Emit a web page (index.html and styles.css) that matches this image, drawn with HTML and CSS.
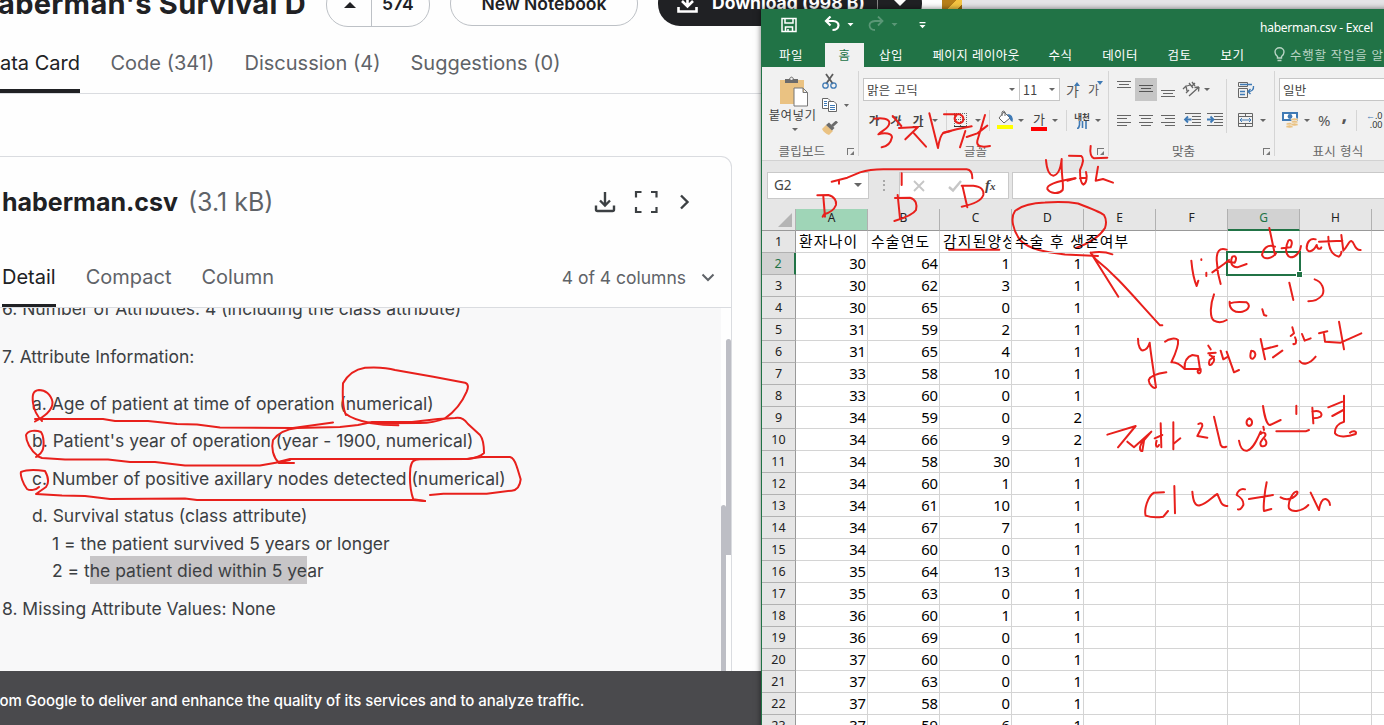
FILE: index.html
```html
<!DOCTYPE html>
<html lang="ko">
<head>
<meta charset="utf-8">
<title>haberman.csv - Excel</title>
<link rel="stylesheet" href="styles.css">
</head>
<body>
<main class="desktop">

<section class="site">
  <header class="site-head">
    <h1 class="title">aberman's Survival D</h1>
    <div class="vote">
      <span class="vote-up"><svg width="12" height="8" viewBox="0 0 12 8"><path d="M0 7L6 1L12 7Z" fill="#202124"/></svg></span>
      <span class="vote-n">574</span>
    </div>
    <div class="notebook">New Notebook</div>
    <div class="download">
      <svg width="21" height="21" viewBox="0 0 21 21" fill="none" stroke="#fff" stroke-width="2.6"><path d="M10.500 0V13M5 8L10.500 13.500L16 8M1.500 14V18.500H19.500V14"/></svg>
      <span class="download-t">Download (998 B)</span>
      <span class="download-more"><svg width="16" height="8" viewBox="0 0 16 8"><path d="M1 0H15L8 7Z" fill="#fff"/></svg></span>
    </div>
    <div class="medal"></div>
    <div class="cover"></div>
  </header>
  <nav class="tabs">
    <span class="tab tab-on">ata Card</span><span class="tab t-code">Code (341)</span><span class="tab t-disc">Discussion (4)</span><span class="tab t-sug">Suggestions (0)</span>
  </nav>
  <article class="card">
    <div class="card-head">
      <b class="file">haberman.csv</b><span class="size">(3.1 kB)</span>
      <div class="tools">
        <svg width="22" height="22" viewBox="0 0 22 22" fill="none" stroke="#3c4043" stroke-width="2.4"><path d="M11 1V14M6 9.500L11 14.500L16 9.500M2 14.500V18.500Q2 20 3.500 20H18.500Q20 20 20 18.500V14.500"/></svg>
        <svg width="24" height="24" viewBox="0 0 24 24" fill="none" stroke="#3c4043" stroke-width="2.2"><path d="M2 7.500V2H7.500M17 2H22.500V7.500M22.500 17V22H17M7.500 22H2V17"/></svg>
        <svg width="12" height="16" viewBox="0 0 12 16" fill="none" stroke="#3c4043" stroke-width="2.4"><path d="M2 1.500L8.500 8L2 14.500"/></svg>
      </div>
    </div>
    <div class="views">
      <span class="view view-on">Detail</span><span class="view">Compact</span><span class="view">Column</span>
      <span class="cols">4 of 4 columns</span>
      <svg width="14" height="9" viewBox="0 0 14 9" fill="none" stroke="#5f6368" stroke-width="2"><path d="M1.500 1.500L7 7L12.500 1.500"/></svg>
    </div>
    <div class="desc">
      <div class="text">
        <p class="p6">6. Number of Attributes: 4 (including the class attribute)</p>
        <p class="p7">7. Attribute Information:</p>
        <p class="sub">a. Age of patient at time of operation (numerical)</p>
        <p class="sub">b. Patient's year of operation (year - 1900, numerical)</p>
        <p class="sub">c. Number of positive axillary nodes detected (numerical)</p>
        <p class="sub tight">d. Survival status (class attribute)</p>
        <p class="deep tight">1 = the patient survived 5 years or longer</p>
        <p class="deep">2 = t<mark>he patient died within 5 ye</mark>ar</p>
        <p>8. Missing Attribute Values: None</p>
      </div>
      <div class="bar bar-outer"></div>
      <div class="bar bar-inner"></div>
    </div>
  </article>
  <footer class="cookie">rom Google to deliver and enhance the quality of its services and to analyze traffic.</footer>
</section>

<section class="excel">
  <header class="caption">
    <svg width="180" height="24" viewBox="0 0 180 24" fill="none">
      <path d="M5 2.500H19V15.500H5ZM8 2.500V7H16V2.500M8.500 15.500V11H15.500V15.500M11 13V15.500" stroke="#fff" stroke-width="1.500"/>
      <path d="M53.500 .5L49 5L53.500 9.500M50 5H56Q61.500 5.500 61.500 9.500Q61 14 55.500 14" stroke="#fff" stroke-width="2.200"/>
      <path d="M70.500 7h6l-3 3.200z" fill="#fff"/>
      <path d="M101 .5L105.500 5L101 9.500M104.500 5H98Q92.500 5.500 92.500 9.500Q93 14 98 14" stroke="#5a9776" stroke-width="1.800"/>
      <path d="M114.500 7h6l-3 3.200z" fill="#5a9776"/>
      <path d="M142.500 6h6v1.200h-6zM142.500 9h6l-3 3.200z" fill="#fff"/>
    </svg>
    <span class="caption-t">haberman.csv - Excel</span>
  </header>
  <nav class="menu">
    <span class="m w58">파일</span><span class="m home">홈</span><span class="m w54">삽입</span><span class="m w116">페이지 레이아웃</span><span class="m w53">수식</span><span class="m w66">데이터</span><span class="m w53">검토</span><span class="m w53">보기</span>
    <svg class="bulb" width="11" height="16" viewBox="0 0 11 16" fill="none" stroke="#b8d4c4" stroke-width="1.400"><path d="M3.500 11V9.500Q1 7.500 1 5A4.500 4.300 0 0 1 10 5Q10 7.500 7.500 9.500V11ZM3.500 13.500H7.500"/></svg>
    <span class="tell">수행할 작업을 알려</span>
  </nav>

  <div class="ribbon">
    <div class="group g-clip">
      <div class="clip">
        <div class="paste">
          <svg width="30" height="31" viewBox="0 0 30 31"><path d="M1 4H25V28H1Z" fill="#eac282"/><path d="M6 3H10Q12.500 -2 15 3H19V7H6Z" fill="#6b6b6b"/><circle cx="12.500" cy="2.800" r="1.300" fill="#eee"/><path d="M15 12H24L28.500 16.500V30H15ZM24 12V16.500H28.500" fill="#fff" stroke="#777"/></svg>
          <span>붙여넣기</span><i class="dd"></i>
        </div>
        <div class="clip-side">
          <svg width="28" height="18" viewBox="0 0 28 18" fill="none"><path d="M5 1L12 11M12 1L5 11" stroke="#5c5c5c" stroke-width="1.800"/><circle cx="4.500" cy="12.500" r="2.700" stroke="#3f7ab5" stroke-width="1.300"/><circle cx="12.500" cy="12.500" r="2.700" stroke="#3f7ab5" stroke-width="1.300"/></svg>
          <svg width="28" height="18" viewBox="0 0 28 18" fill="#fff" stroke="#666"><path d="M1.500 1.500H7L9 3.500V11.500H1.500Z"/><path d="M3 4.500H6M3 6.500H6M3 8.500H6" stroke="#3f7ab5"/><path d="M7.500 4.500H13L15.500 7V14.500H7.500Z"/><path d="M9 8.500H14M9 10.500H14M9 12.500H14" stroke="#3f7ab5"/><path d="M23 7h5l-2.500 3z" fill="#666" stroke="none"/></svg>
          <svg width="28" height="18" viewBox="0 0 28 18"><path d="M1 8L5 4L12 10L8 14Q3 12 1 8Z" fill="#eac282"/><path d="M5 4L8 1.500L13.500 7L11 9.500Z" fill="#6b6b6b"/><path d="M10 4L15 -.5L17 1.500L12 6Z" fill="#6b6b6b"/></svg>
        </div>
      </div>
      <div class="label"><span>클립보드</span><i class="launch"></i></div>
    </div>

    <div class="group g-font">
      <div class="row">
        <span class="combo c-font">맑은 고딕<i class="dd"></i></span><span class="combo c-size">11<i class="dd"></i></span>
        <span class="ga ga-up">가<svg width="6" height="4" viewBox="0 0 6 4"><path d="M0 4L3 0L6 4Z" fill="#3f7ab5"/></svg></span>
        <span class="ga ga-dn">가<svg width="6" height="4" viewBox="0 0 6 4"><path d="M0 0H6L3 4Z" fill="#3f7ab5"/></svg></span>
      </div>
      <div class="row row2">
        <b class="k w22">가</b><b class="k w22 it">가</b><b class="k w22 un">가</b><i class="dd w12"></i><i class="sep"></i>
        <svg class="edge" width="20" height="18" viewBox="0 0 20 18" fill="none" stroke="#666"><path d="M3 2.500H16M3 8.500H16M3.500 2V15M9.500 2V15M15.500 2V15" stroke-dasharray="1 1"/><path d="M3 15.500H16" stroke="#333"/></svg>
        <i class="dd w12"></i><i class="sep"></i>
        <svg class="fill" width="20" height="20" viewBox="0 0 20 20"><path d="M4 8L9 2L15 8L9 13Z" fill="#fff" stroke="#666"/><path d="M7 6V2Q8 0 10 2V6" fill="none" stroke="#666"/><path d="M12 4Q19 4 17.500 12Q15 11 14 7Z" fill="#3f7ab5"/><path d="M2 15H18V19H2Z" fill="#ff0"/></svg>
        <i class="dd w12"></i>
        <span class="k red">가</span><i class="dd w12"></i><i class="sep"></i>
        <span class="ruby"><small>내천</small><svg width="10" height="8" viewBox="0 0 10 8" stroke="#3f7ab5" stroke-width="1.600" fill="none"><path d="M2.500 0V4Q2 7 0 8M5.500 0V7M9 0V8"/></svg></span><i class="dd w12"></i>
      </div>
      <div class="label"><span>글꼴</span><i class="launch"></i></div>
    </div>

    <div class="group g-align">
      <div class="row">
        <svg class="al" width="22" height="23" viewBox="0 0 22 23" stroke="#666"><path d="M4 3.500H18M6 6.500H16M4 9.500H18"/></svg>
        <svg class="al on" width="22" height="23" viewBox="0 0 22 23" stroke="#555"><path d="M4 7.500H18M6 10.500H16M4 13.500H18"/></svg>
        <svg class="al" width="22" height="23" viewBox="0 0 22 23" stroke="#666"><path d="M4 12.500H18M6 15.500H16M4 18.500H18"/></svg>
        <svg class="orient" width="22" height="23" viewBox="0 0 22 23" fill="none" stroke="#666" stroke-width="1.300"><path d="M7 18L17 9M17 9L12.500 9.500M17 9L16.500 13.500"/><path d="M1 11L4 8L5 13M4 15L7 12M7 5L11 10M5 8L8 7M10 4L13 8M10 8L13 5"/></svg>
        <i class="dd w12 or-dd"></i><i class="tall"></i>
        <svg width="22" height="20" viewBox="0 0 22 20" fill="none" stroke="#666"><path d="M3.500 2.500H12.500V6.500H3.500ZM3.500 8.500H12.500V17.500H3.500Z"/><path d="M5 4.500H17M5 11.500H10M5 14.500H10M18.500 6Q19 11.500 13 11.500M15.500 9L13 11.500L15.500 14" stroke="#3f7ab5" stroke-width="1.400"/></svg>
      </div>
      <div class="row row2">
        <svg class="al" width="22" height="14" viewBox="0 0 22 14" stroke="#666"><path d="M4 2.500H18M4 5.500H14M4 9.500H18M4 12.500H14"/></svg>
        <svg class="al" width="22" height="14" viewBox="0 0 22 14" stroke="#666"><path d="M4 2.500H18M6 5.500H16M4 9.500H18M6 12.500H16"/></svg>
        <svg class="al" width="22" height="14" viewBox="0 0 22 14" stroke="#666"><path d="M4 2.500H18M8 5.500H18M4 9.500H18M8 12.500H18"/></svg>
        <svg class="orient" width="22" height="14" viewBox="0 0 22 14" fill="none" stroke="#666"><path d="M3 .5H19M10 3.500H19M10 6.500H19M10 9.500H19M3 12.500H19"/><path d="M9.500 6.500H3.500M6 3.500L3 6.500L6 9.500" stroke="#3f7ab5" stroke-width="1.800"/></svg>
        <svg width="22" height="14" viewBox="0 0 22 14" fill="none" stroke="#666"><path d="M3 .5H19M10 3.500H19M10 6.500H19M10 9.500H19M3 12.500H19"/><path d="M3 6.500H9M6.500 3.500L9.500 6.500L6.500 9.500" stroke="#3f7ab5" stroke-width="1.800"/></svg>
        <svg class="merge" width="18" height="16" viewBox="0 0 18 16" fill="none" stroke="#666"><path d="M1.500 1.500H15.500V14.500H1.500ZM1.500 4.500H15.500M1.500 11.500H15.500M8.500 1.500V4.500M8.500 11.500V14.500"/><path d="M3 8H14M5 6L3 8L5 10M12 6L14 8L12 10" stroke="#3f7ab5"/></svg>
        <i class="dd w16"></i>
      </div>
      <div class="label"><span>맞춤</span><i class="launch"></i></div>
    </div>

    <div class="group g-num">
      <div class="row"><span class="combo c-num">일반</span></div>
      <div class="row row2">
        <svg class="cash" width="20" height="18" viewBox="0 0 20 18"><path d="M1 1H17V10H1Z" fill="#3f7ab5"/><path d="M3 3H15V8H3Z" fill="#fff"/><circle cx="9" cy="5.500" r="2.400" fill="#3f7ab5"/><g fill="#eac282" stroke="#f1f1f1" stroke-width=".6"><ellipse cx="13.500" cy="8.500" rx="3.500" ry="1.600"/><ellipse cx="13.500" cy="11" rx="3.500" ry="1.600"/><ellipse cx="8.500" cy="13" rx="3.500" ry="1.600"/><ellipse cx="8.500" cy="15.500" rx="3.500" ry="1.600"/><ellipse cx="13.500" cy="13.500" rx="3.500" ry="1.600"/></g></svg>
        <i class="dd w12"></i><span class="pct">%</span><span class="comma">,</span><i class="sep"></i>
        <span class="dec"><span><em>←</em>.0</span><span>.00</span></span>
      </div>
      <div class="label"><span>표시 형식</span></div>
    </div>
  </div>

  <div class="formula">
    <div class="namebox">G2<i class="dd"></i></div>
    <div class="dots"></div>
    <div class="fx">
      <svg width="14" height="14" viewBox="0 0 14 14" stroke="#c6c6c6" stroke-width="1.800" fill="none"><path d="M2 2L12 12M12 2L2 12"/></svg>
      <svg width="14" height="14" viewBox="0 0 14 14" stroke="#c6c6c6" stroke-width="2.400" fill="none"><path d="M1 8L5 11.500L13 2"/></svg>
      <span class="fxt">f<small>x</small></span>
    </div>
    <div class="input"></div>
  </div>

  <div class="sheet" id="sheet"></div>
</section>

<svg class="ink" width="1384" height="725" viewBox="0 0 1384 725">
  <!-- marks over the attribute list -->
  <g stroke-width="2">
    <path d="M35 421.500C43 417 53 411 52.500 402C51 394 45 390 39 390C33 390.500 32 395 33 403C34 411 37 416 42 421"/>
    <path d="M35 419H103L115 421H148L177 424L197 424.500L220 427.500L293 428L333 422.500"/>
    <path d="M294 463H279C273 457 271 448 273 440C279 432 287 429 297 428L340 427L358 425L372 422H412L438 419L455 418C462 417 465 420 468 424L480 435C484 440 484 448 484 453C480 457 475 458 468 459H290L278 462"/>
    <path d="M38 456C30 450 26 441 26 435C28 430 36 430 41 432C44 436 44 445 43 449C42 453 39 455 36 457M37 456L42 458L65 459.500H108L130 462H155L185 465.500H260L280 462L290 460"/>
    <path d="M39 487C36 490 30 491 27 489C23 484 20 475 21 472C28 469 38 470 45 471C49 478 49 483 46 487L36 494L62 495.500L85 496L110 499L185 498.500L197 500H413L425 501"/>
  </g>
  <g transform="translate(340 220) scale(.33333)">
    <path d="M18 585C5 560 8 520 9 490C25 460 50 447 75 443C110 441 140 442 165 450L280 470L375 488C388 493 384 505 380 515C365 550 345 575 315 595C290 605 270 609 240 609L95 610C60 603 30 592 18 582M90 609L130 614L175 616"/>
    <path d="M255 843L220 838C210 810 208 780 211 745C214 725 220 718 240 718L380 717L425 711H510C525 715 528 735 532 745L542 778C540 800 532 810 515 812L440 821H310L270 825"/>
  </g>
  <!-- notes over the ribbon -->
  <g transform="translate(860 70) scale(.33333)">
    <path d="M43 146C65 142 88 146 88 158C88 175 68 180 55 193C75 186 96 190 96 202C92 220 80 230 65 232"/>
    <path d="M98 138L124 168M117 174L174 171L136 208M162 190L198 230M208 130L234 234C237 215 241 195 250 189L272 183"/>
    <path d="M252 133H300C313 138 315 157 298 160C282 158 281 142 289 136M250 188L290 178L335 169M316 183L300 232M320 201L352 190L382 167M375 135L352 212C348 232 370 232 390 228"/>
  </g>
  <g transform="translate(760 155) scale(.33333)">
    <path d="M215 80L262 68L300 52C330 43 345 43 370 43H620C632 44 637 55 637 70M237 75V86M425 55V90"/>
    <path d="M172 121L205 120C225 125 230 140 228 150C222 165 208 174 192 178L188 185M190 125L195 185"/>
    <path d="M405 129L450 128C468 132 472 150 468 165C460 178 430 190 403 198M413 120L420 190"/>
    <path d="M605 92L640 92C665 95 672 105 670 120C665 135 640 148 605 155M608 95L622 157"/>
    <path d="M567 284H718"/>
    <path d="M858 15C860 40 865 60 880 62C895 60 902 40 905 12C903 60 912 90 908 105C895 120 870 115 862 102C860 90 885 80 945 70"/>
  </g>
  <path stroke-width="2" d="M1098 256L1065 254.500C1045 252 1030 250 1020 240C1013 230 1010 218 1015 211C1022 205 1032 203 1045 202.500C1060 201.500 1072 202.500 1078 203.500C1090 208 1100 212 1104 215C1107 220 1106 225 1105 228C1100 236 1090 243 1076 248"/>
  <!-- notes over the sheet -->
  <g transform="translate(1064 140) scale(.33333)">
    <path d="M15 47L52 48C62 55 55 75 48 90C48 115 50 130 58 134C68 130 70 110 66 96M48 115L66 113M80 18C77 40 82 52 90 55L130 53M102 80L95 122L117 117L147 128M10 122L35 115"/>
    <path d="M145 343C120 333 100 335 80 338L163 470M80 338L95 358C160 410 200 460 288 556H295"/>
    <path d="M382 362C385 395 390 420 398 438L403 422M412 358V360M427 398V408M488 329C465 322 458 335 458 360L462 400L470 432M445 397L480 372L495 360M492 365L512 368C520 355 515 345 505 350C498 365 500 380 520 382L548 372"/>
    <path d="M616 264L633 345M633 320C610 312 598 325 594 345C600 360 622 358 636 340M653 325L680 322C688 305 680 295 673 302C662 325 665 348 680 352C695 352 710 335 711 318M755 298C740 293 728 305 728 325C732 340 748 335 758 315C760 330 770 328 772 322M793 290C793 320 800 345 825 350C830 345 833 340 832 335M765 305L835 302M832 285L838 332C850 320 855 302 862 303C872 305 870 332 890 330"/>
    <path d="M450 463C440 490 435 530 450 542C465 550 480 545 488 540M497 485C495 510 515 520 535 515C555 510 560 495 548 487C530 485 510 485 497 490M595 508L600 525L607 527M676 428L688 480M752 418C775 425 783 450 775 465C765 478 748 484 733 484"/>
  </g>
  <g transform="translate(1064 310) scale(.33333)">
    <path d="M222 86C222 110 230 123 238 121C250 118 255 105 257 98C260 130 270 190 276 232C270 238 255 225 254 210C260 195 285 190 307 187"/>
    <path d="M303 95C315 85 335 83 342 90C345 110 330 140 322 157C335 155 350 165 362 177L410 177C412 190 405 192 402 188C398 180 408 178 410 180M362 177C360 150 370 140 385 135L402 138L408 178"/>
    <path d="M433 107L440 118M433 130L455 128M437 135C450 140 455 150 445 160C438 170 432 165 437 150L450 140M470 122L478 148L492 140M488 125L510 187L525 180M562 122C556 140 560 150 568 145C578 138 575 122 562 122M590 87L603 148M600 118L640 107M627 142L655 122"/>
    <path d="M685 52L690 70L680 78M693 82C700 95 695 105 688 102M714 72L722 92L740 85M765 70L790 64M780 72L783 95L830 98L892 70M825 35L840 118M707 153C715 165 735 165 755 140"/>
    <path d="M130 374L215 348L162 412M190 395L210 412L262 365L232 400C225 415 228 425 235 423L240 392M272 385L295 375M290 340L292 412M278 392C272 410 280 415 285 405M328 337V418M328 402L349 385M403 342C415 335 418 345 412 355L400 378L430 383M450 320L470 405C475 415 482 412 487 410"/>
    <path d="M556 325C545 330 545 345 555 348C567 345 567 330 556 325M597 288C600 310 608 345 618 345L650 330M525 392C528 410 535 425 550 422C570 415 580 385 590 365M598 350L600 360M590 372C600 362 608 372 602 380C592 392 585 400 592 408C605 412 612 400 603 388M697 287V312M637 364H725L735 360M745 293L748 340M745 305C765 298 778 310 770 320C762 325 755 325 748 325M793 292L835 275M805 318L838 300M840 257V335C820 340 812 355 813 370C820 382 850 382 875 372C880 362 865 362 858 368"/>
    <path d="M300 547L270 548C250 560 240 600 245 617C260 622 285 622 298 620L312 603M331 528L333 610M385 545C387 570 392 590 408 586C430 580 445 560 460 552L470 575C475 588 482 587 490 588M543 538C530 533 520 545 518 555C530 562 540 570 538 585C532 597 527 600 522 598M608 517C602 545 597 590 600 603L622 597M555 567L627 555M650 562C675 578 705 555 700 545C688 543 670 575 675 595C685 608 715 605 733 585M740 548L765 600C768 580 775 565 785 567C795 570 797 575 798 585"/>
  </g>
</svg>
</main>
<script src="sheet.js"></script>
</body>
</html>
```
FILE: styles.css
```css
* { box-sizing: border-box; }
body { margin: 0; }
p, h1 { margin: 0; }
svg { display: block; flex: none; }
i { font-style: normal; flex: none; }
.desktop { position: relative; width: 1384px; height: 725px; overflow: hidden; background: #fff; }

/* dataset page */
.site { position: absolute; inset: 0; display: flex; flex-direction: column; font-family: Inter, "Liberation Sans", sans-serif; color: #202124; background: #fefefe; }
.site-head { display: flex; height: 27px; overflow: hidden; align-items: flex-end; flex: none; }
.title { width: 326px; margin-left: -2px; padding-bottom: 6px; font-size: 29px; line-height: 34px; font-weight: 700; white-space: nowrap; letter-spacing: .3px; }
.title + * { margin-left: 2px; }
.vote { display: flex; width: 104px; height: 45px; border: 1px solid #bdc1c6; border-radius: 22px; font-size: 17.500px; font-weight: 600; flex: none; }
.vote-up { width: 45px; padding: 18px 0 0 17px; border-right: 1px solid #bdc1c6; }
.vote-n { padding: 10px 0 0 10px; line-height: 22px; }
.notebook { width: 188px; height: 45px; margin: 0 20px 1px; border: 1px solid #bdc1c6; border-radius: 22px; flex: none; font-size: 17.500px; line-height: 22px; padding-top: 11px; text-align: center; font-weight: 600; }
.download { display: flex; width: 264px; height: 45px; margin-bottom: 1px; border-radius: 22px; background: #202124; color: #fff; font-size: 17.500px; font-weight: 700; flex: none; padding: 12px 0 0 19px; }
.download-t { width: 165px; margin: -1px 0 0 14px; line-height: 22px; white-space: nowrap; }
.download-more { height: 45px; margin-top: -12px; border-left: 1px solid #888; padding: 18px 0 0 14px; }
.medal { width: 20px; height: 27px; margin-left: 20px; border-radius: 0 0 9px 9px; background: linear-gradient(135deg, #b8801a 30%, #f5c542 31%, #f5c542 52%, #9a6a0c 53%); flex: none; }
.cover { flex: 1; height: 27px; background: #e5e5e7; }
.tabs { display: flex; height: 67px; flex: none; border-bottom: 1px solid #dadce0; font-size: 20px; line-height: 24px; color: #5f6368; padding-top: 24px; }
.tab { white-space: nowrap; height: 42px; }
.tab-on { width: 80px; color: #202124; border-bottom: 4px solid #202124; border-radius: 0 3px 0 0; }
.t-code { margin-left: 30.500px; width: 104px; }
.t-disc { margin-left: 30px; width: 136px; }
.t-sug { margin-left: 30px; }
.card { width: 734px; height: 515px; margin: 62px 0 0 -2px; flex: none; border: 1px solid #dadce0; border-bottom: 0; border-radius: 0 11px 0 0; }
.card-head { display: flex; align-items: center; height: 90px; padding-left: 3px; font-size: 25px; }
.file { font-weight: 700; width: 186px; white-space: nowrap; }
.size { color: #5f6368; white-space: nowrap; }
.tools { display: flex; align-items: center; gap: 17px; margin-left: auto; padding-right: 40px; }
.tools svg:first-child { margin-right: 1px; }
.tools svg:last-child { margin-left: 4px; }
.views { display: flex; align-items: center; height: 61px; padding-left: 3px; border-bottom: 1px solid #dadce0; font-size: 20px; color: #5f6368; }
.view { height: 60px; line-height: 61px; margin-right: 30px; }
.view-on { color: #202124; border-bottom: 3px solid #202124; border-radius: 2px 2px 0 0; }
.cols { margin-left: auto; margin-right: 15px; font-size: 17.500px; }
.views svg { margin-right: 16px; }
.desc { display: flex; height: 363px; overflow: hidden; }
.text { flex: 1; background: #f8f8f9; padding-left: 3px; font-size: 17.500px; line-height: 27.500px; color: #3c4043; letter-spacing: -.01px; }
.text p { white-space: nowrap; margin-bottom: 10px; }
.text .p6 { margin-top: -13px; margin-bottom: 20px; }
.text .p7 { margin-bottom: 19.500px; }
.text .sub { padding-left: 30px; }
.text .deep { padding-left: 50px; }
.text .tight { margin-bottom: 0; }
mark { background: #c7c5c7; color: inherit; padding: 4px 0 3px; }
.bar { width: 5px; background: #bdbec5; border-radius: 3px 3px 0 0; flex: none; }
.bar-outer { margin-top: 197px; }
.bar-inner { margin-top: 31px; height: 216px; }
.cookie { height: 54px; flex: none; padding-top: 20px; text-indent: -6px; background: #4a4a4d; color: #fff; font-size: 15px; letter-spacing: -.04px; line-height: 20px; font-weight: 500; white-space: nowrap; }

/* spreadsheet window */
.excel { position: absolute; left: 761px; top: 9px; width: 640px; height: 730px; border-left: 1px solid #217346; background: #e6e6e6; box-shadow: 0 0 6px rgba(0,0,0,.55); font-family: "Noto Sans", "Noto Sans CJK KR", sans-serif; overflow: hidden; color: #444; }
.caption { display: flex; height: 34px; background: #217346; color: #fff; padding: 7px 0 0 15px; }
.caption-t { margin-left: 303px; font-size: 12px; line-height: 24px; white-space: nowrap; letter-spacing: -.25px; }
.menu { display: flex; height: 24px; background: #217346; color: #fff; font: 12.500px/23px "Noto Sans CJK KR", sans-serif; letter-spacing: .4px; }
.m { text-align: center; flex: none; white-space: nowrap; }
.home { width: 39px; margin-left: 5px; background: #f1f1f1; color: #217346; }
.w58 { width: 58px; } .w54 { width: 54px; } .w116 { width: 116px; } .w53 { width: 53px; } .w66 { width: 66px; }
.w22 { width: 22px; } .w12 { width: 12px; } .w16 { width: 16px; }
.bulb { margin: 4px 5px 0 15px; }
.tell { color: #b8d4c4; white-space: nowrap; letter-spacing: .7px; }
.ribbon { display: flex; height: 94px; background: #f1f1f1; border-bottom: 1px solid #d2d2d2; font-family: "Noto Sans CJK KR", sans-serif; font-size: 12.500px; }
.group { position: relative; display: flex; flex-direction: column; flex: none; padding-top: 11px; }
.group::after { content: ""; position: absolute; right: 0; top: 4px; height: 85px; width: 1px; background: #d5d5d5; }
.g-clip { width: 97px; } .g-font { width: 250px; padding-left: 4px; } .g-align { width: 166px; padding-left: 4px; } .g-num { width: 140px; padding-left: 4px; }
.row { display: flex; height: 23px; align-items: center; flex: none; }
.row2 { margin-top: 7px; height: 24px; }
.clip { display: flex; height: 65px; margin-top: -5px; padding-left: 4px; }
.paste { display: flex; width: 53px; flex-direction: column; align-items: center; padding-top: 3px; line-height: 16px; white-space: nowrap; letter-spacing: .4px; }
.paste svg { margin-left: 3px; }
.paste .dd { margin: 5px 0 0 5px; }
.clip-side { display: flex; flex-direction: column; gap: 6px; padding: 0 0 0 2px; }
.dd { display: flex; justify-content: center; align-items: center; }
.dd::before { content: ""; border: 3px solid transparent; border-top-color: #666; border-bottom: 0; }
.sep { width: 1px; height: 21px; margin: 0 5px; background: #d5d5d5; }
.tall { width: 1px; height: 54px; margin: 32px 8px 0 13px; background: #d5d5d5; }
.or-dd { margin-left: -3px; }
.label { position: relative; margin-top: auto; height: 18px; line-height: 17px; text-align: center; color: #666; }
.g-font .label, .g-align .label { margin-left: -21px; }
.g-clip .label { padding-right: 17px; letter-spacing: .3px; }
.g-num .label { padding-right: 14px; margin-left: -4px; letter-spacing: .3px; }
.launch { position: absolute; right: 5px; top: 6px; width: 7px; height: 7px; border: solid #777; border-width: 1px 0 0 1px; }
.launch::after { content: ""; position: absolute; right: 0; bottom: 0; border: 2.500px solid; border-color: transparent #777 #777 transparent; }
.combo { display: flex; align-items: center; justify-content: space-between; height: 23px; border: 1px solid #c6c6c6; background: #fff; padding: 0 4px 1px 3px; color: #444; flex: none; letter-spacing: .3px; }
.c-font { width: 157px; } .c-size { width: 41px; margin-left: -1px; } .c-num { width: 140px; }
.ga { position: relative; width: 22px; font-size: 14px; padding-left: 6px; color: #555; flex: none; }
.ga-dn { font-size: 12px; }
.ga svg { position: absolute; right: 2px; top: 2px; }
.ga-dn svg { top: 0; right: 1px; }
.k { font-size: 11.500px; text-align: center; flex: none; line-height: 17px; }
.it { transform: skewX(-12deg); } .un { text-decoration: underline; }
.red { width: 16px; border-bottom: 4px solid red; margin: 1px 2px 0 4px; height: 20px; line-height: 15px; font-size: 13px; }
.edge { margin-right: 1px; margin-left: -1px; }
.fill { margin-left: 0; }
.ruby { width: 20px; display: flex; flex-direction: column; align-items: center; flex: none; }
.ruby small { font-size: 8.500px; line-height: 10px; font-weight: 700; white-space: nowrap; }
.on { background: #c6c6c6; }
.orient { margin-left: 3px; }
.merge { margin-left: 11px; }
.cash { margin-left: 2px; }
.pct { margin-left: 5px; font: 15px/20px "Noto Sans", sans-serif; color: #555; }
.comma { margin-left: 11px; font: bold 20px/12px "Noto Sans", sans-serif; height: 24px; color: #555; width: 10px; }
.dec { display: flex; flex-direction: column; width: 20px; font: 9px/9px "Noto Sans", sans-serif; align-items: flex-end; flex: none; color: #333; white-space: nowrap; }
.dec em { font-style: normal; color: #3f7ab5; }

.formula { display: flex; height: 48px; padding: 11px 0 0 5px; }
.namebox, .fx, .input { height: 27px; background: #fff; border: 1px solid #c9c9c9; flex: none; }
.namebox { display: flex; justify-content: space-between; align-items: center; width: 102px; padding: 0 6px 2px; font-size: 13.500px; }
.namebox .dd::before { border-width: 4px 4px 0; }
.dots { width: 2px; height: 11px; margin: 8px 14px 0 14px; background: repeating-linear-gradient(#a8a8a8 0 2px, transparent 2px 4.500px); }
.fx { display: flex; align-items: center; width: 110px; gap: 22px; padding-left: 11px; }
.fx svg:first-child { margin-left: 1px; }
.fxt { font: italic bold 15px "Liberation Serif", serif; margin-left: 1px; }
.fxt small { font-size: 11px; }
.input { flex: 1; margin-left: 3px; }

.sheet { display: grid; grid-template-columns: 34px repeat(9, 72px); grid-template-rows: 22px; grid-auto-rows: 22px; background: #fff; }
.sheet > div { border: solid #d4d4d4; border-width: 0 1px 1px 0; font-size: 14.800px; line-height: 20px; padding: 0 1.500px 0 0; color: #000; text-align: right; letter-spacing: -.4px; white-space: nowrap; overflow: hidden; }
.sheet > .ch, .sheet > .rh, .sheet > .corner { background: #e6e6e6; text-align: center; font-size: 12px; letter-spacing: 0; color: #222; }
.sheet > .ch { border-right-color: #b1b1b1; border-bottom-color: #999; line-height: 17px; padding: 0; }
.sheet > .rh { border-right-color: #999; border-bottom-color: #b1b1b1; line-height: 22px; font-size: 12.500px; padding: 0; }
.sheet > .corner { border-color: #999; border-right-color: #b1b1b1; padding: 4px 3px 3px 16px; }
.corner::before { content: ""; display: block; height: 14px; background: #b4b4b4; clip-path: polygon(100% 0, 100% 100%, 0 100%); }
.sheet > .green { background: #9fd5b7; }
.sheet > .sel { background: #d2d2d2; color: #217346; }
.sheet > .ch.sel { border-bottom: 2px solid #217346; }
.sheet > .rh.sel { border-right: 2px solid #217346; }
.sheet > .ko { text-align: left; font-family: "Noto Sans CJK KR", sans-serif; letter-spacing: 1.200px; padding: 0 0 0 3px; line-height: 19px; }
.sheet > .spill { overflow: visible; border-right-color: transparent; position: relative; z-index: 1; }
.sheet > .active { position: relative; overflow: visible; }
.active::before { content: ""; position: absolute; inset: -2px; border: 2px solid #217346; }
.active::after { content: ""; position: absolute; right: -3px; bottom: -3px; width: 5px; height: 5px; background: #217346; box-shadow: 0 0 0 1px #fff; }

.ink { position: absolute; left: 0; top: 0; fill: none; stroke: #e8201c; stroke-width: 6; stroke-linecap: round; stroke-linejoin: round; pointer-events: none; }
```
FILE: sheet.js
```js
const header = ['환자나이', '수술연도', '감지된양성', '수술 후 생존여부'];
const rows = [
  [30, 64, 1, 1], [30, 62, 3, 1], [30, 65, 0, 1], [31, 59, 2, 1], [31, 65, 4, 1],
  [33, 58, 10, 1], [33, 60, 0, 1], [34, 59, 0, 2], [34, 66, 9, 2], [34, 58, 30, 1],
  [34, 60, 1, 1], [34, 61, 10, 1], [34, 67, 7, 1], [34, 60, 0, 1], [35, 64, 13, 1],
  [35, 63, 0, 1], [36, 60, 1, 1], [36, 69, 0, 1], [37, 60, 0, 1], [37, 63, 0, 1],
  [37, 58, 0, 1], [37, 59, 6, 1]
];
const sheet = document.getElementById('sheet');
function add(cls, text) {
  const el = document.createElement('div');
  if (cls) el.className = cls;
  el.textContent = text;
  sheet.append(el);
}
add('corner', '');
['A', 'B', 'C', 'D', 'E', 'F', 'G', 'H', ''].forEach(c =>
  add('ch' + (c === 'A' ? ' green' : c === 'G' ? ' sel' : ''), c));
add('rh', '1');
for (let c = 0; c < 9; c++) add(c < 4 ? (c === 3 ? 'ko spill' : 'ko') : '', header[c] || '');
rows.forEach((row, r) => {
  add('rh' + (r === 0 ? ' sel' : ''), r + 2);
  for (let c = 0; c < 9; c++) add(r === 0 && c === 6 ? 'active' : '', row[c] ?? '');
});
```
